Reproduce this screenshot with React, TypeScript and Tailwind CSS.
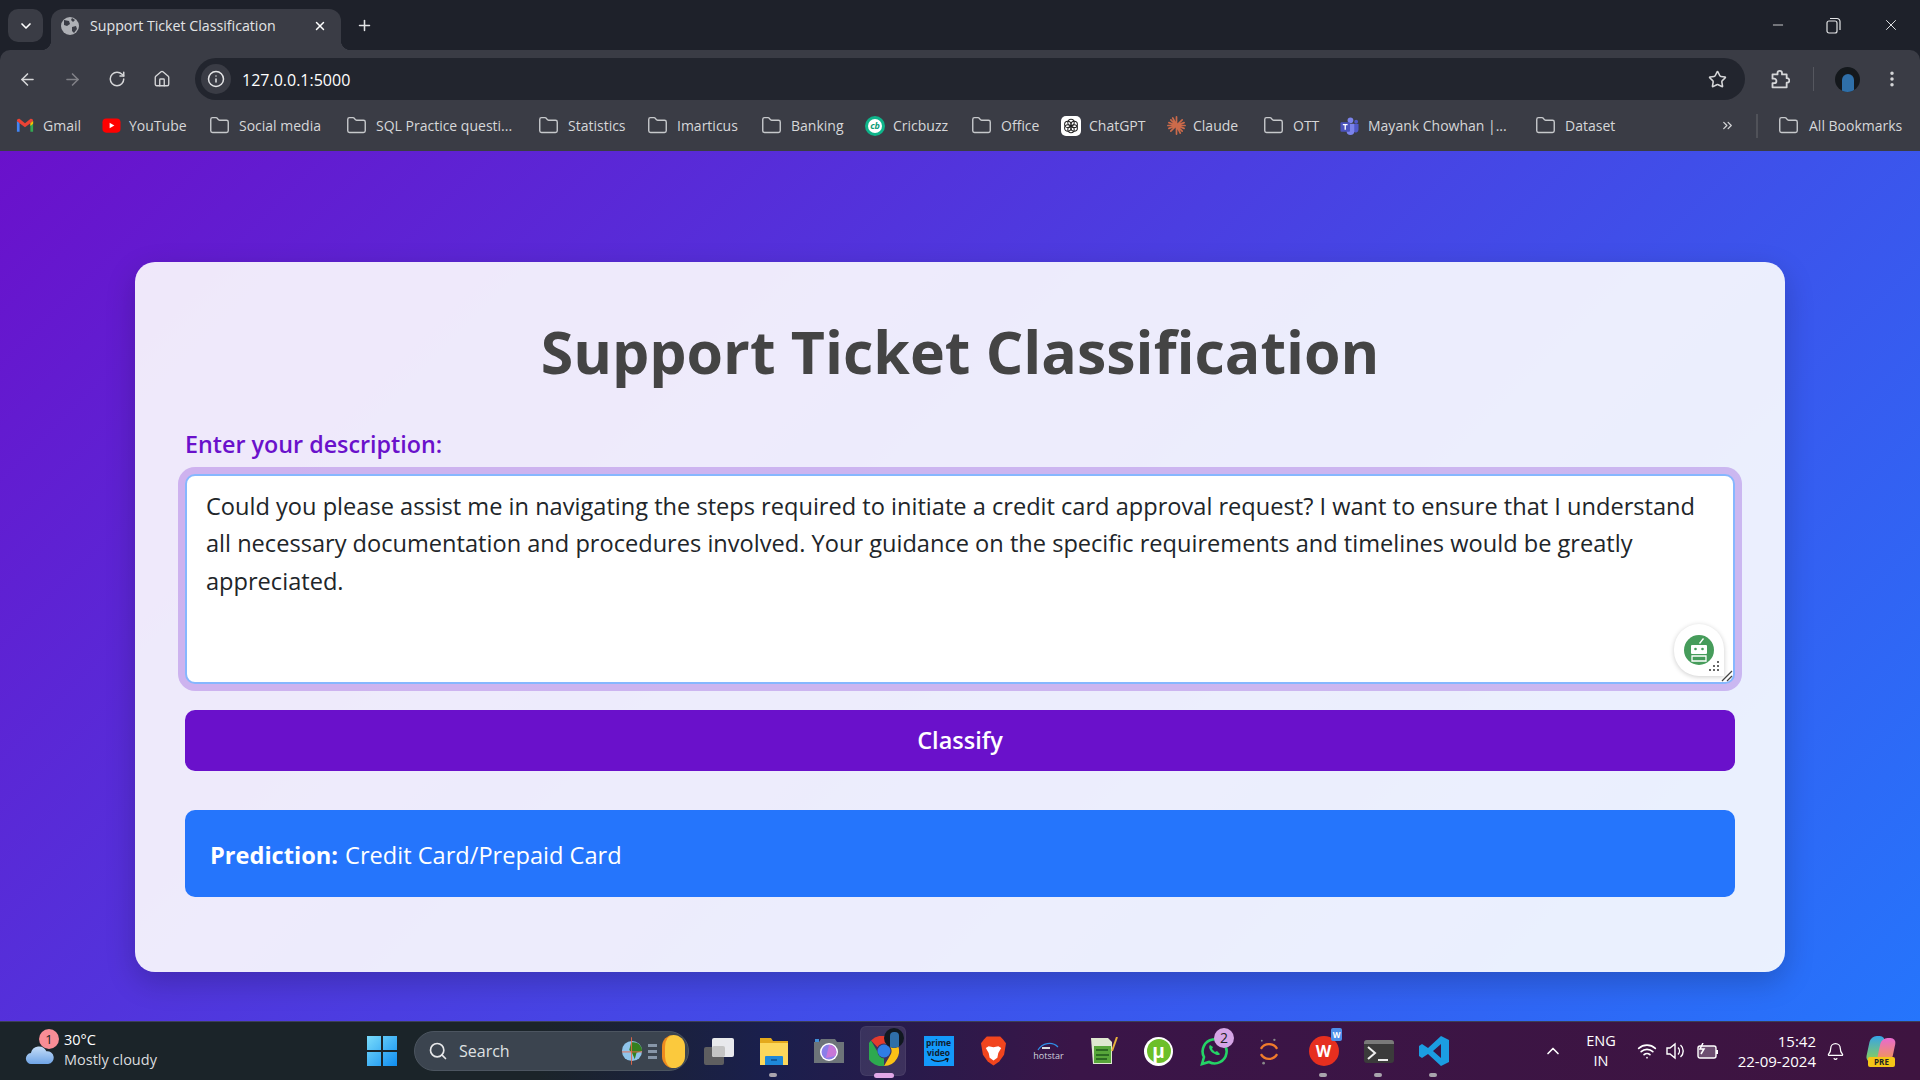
import { ArrowLeft, ArrowRight, RotateCw, Info, Star, MoreVertical, ChevronDown, ChevronUp, X, Plus, Minus, Search, Wifi, Bell, ChevronsRight, Folder, Home } from "lucide-react";
import type { ReactNode } from "react";

const FolderIcon = () => <Folder className="w-[21px] h-[21px] text-[#c7c9cc] shrink-0" strokeWidth={1.6} />;

const Gmail = () => (
  <svg viewBox="0 0 20 16" className="w-[18px] h-[15px] shrink-0">
    <path d="M1 15V3l3 2v10z" fill="#4285f4" />
    <path d="M16 15V5l3-2v12z" fill="#34a853" />
    <path d="M1 3c0-2 2-3 3.500-2L10 5.500 15.500 1C17 0 19 1 19 3l-3 2.500-6 4.500-6-4.500z" fill="#ea4335" />
    <path d="M16 5.500 19 3v3l-3 2.500z" fill="#fbbc04" />
  </svg>
);
const YouTube = () => (
  <svg viewBox="0 0 20 20" className="w-[19px] h-[19px] shrink-0">
    <rect x="0.500" y="2.500" width="19" height="15" rx="4" fill="#f00" />
    <path d="M8 7l5 3-5 3z" fill="#fff" />
  </svg>
);
const Cricbuzz = () => (
  <div className="w-[20px] h-[20px] rounded-full bg-[#0eb48a] flex items-center justify-center shrink-0">
    <div className="w-[14px] h-[14px] rounded-full bg-white text-[#0b9c77] text-[9px] font-bold leading-[14px] text-center italic">cb</div>
  </div>
);
const ChatGPT = () => (
  <div className="w-[20px] h-[20px] rounded-[5px] bg-white flex items-center justify-center shrink-0">
    <svg viewBox="0 0 20 20" className="w-[16px] h-[16px]" fill="none" stroke="#222" strokeWidth="1.300">
      <circle cx="10" cy="5.500" r="4" />
      <circle cx="14" cy="8" r="4" />
      <circle cx="14" cy="12.500" r="4" />
      <circle cx="10" cy="14.500" r="4" />
      <circle cx="6" cy="12.500" r="4" />
      <circle cx="6" cy="8" r="4" />
    </svg>
  </div>
);
const Claude = () => (
  <svg viewBox="0 0 20 20" className="w-[19px] h-[19px] shrink-0" stroke="#cc6a4a" strokeWidth="1.800" strokeLinecap="round">
    <path d="M10 10 10 1M10 10 10 19M10 10 1 10M10 10 19 10M10 10 4 4M10 10 16 4M10 10 4 16M10 10 16 16M10 10 6 2M10 10 14 18M10 10 2 7M10 10 18 13M10 10 18 7M10 10 2 13" />
  </svg>
);
const Teams = () => (
  <svg viewBox="0 0 20 20" className="w-[19px] h-[20px] shrink-0">
    <circle cx="11" cy="4" r="3" fill="#7b83eb" />
    <circle cx="17" cy="5.500" r="2" fill="#5059c9" />
    <path d="M14 8h5.500v6a3 3 0 0 1-5.500 1.500z" fill="#5059c9" />
    <path d="M7 7.500h8v8a4 4 0 0 1-8 0z" fill="#7b83eb" />
    <rect x="0.500" y="6" width="10" height="10" rx="1" fill="#4b53bc" />
    <path d="M3 8.500h5M5.500 8.500v5.500" stroke="#fff" strokeWidth="1.400" />
  </svg>
);

const bookmarks: { label: string; icon: ReactNode; w: string; gap: string }[] = [
  { label: "Gmail", icon: <Gmail />, w: "w-[86px]", gap: "gap-[9px]" },
  { label: "YouTube", icon: <YouTube />, w: "w-[107px]", gap: "gap-[8px]" },
  { label: "Social media", icon: <FolderIcon />, w: "w-[137px]", gap: "gap-[9px]" },
  { label: "SQL Practice questi...", icon: <FolderIcon />, w: "w-[192px]", gap: "gap-[9px]" },
  { label: "Statistics", icon: <FolderIcon />, w: "w-[109px]", gap: "gap-[9px]" },
  { label: "Imarticus", icon: <FolderIcon />, w: "w-[114px]", gap: "gap-[9px]" },
  { label: "Banking", icon: <FolderIcon />, w: "w-[104px]", gap: "gap-[9px]" },
  { label: "Cricbuzz", icon: <Cricbuzz />, w: "w-[106px]", gap: "gap-[8px]" },
  { label: "Office", icon: <FolderIcon />, w: "w-[90px]", gap: "gap-[9px]" },
  { label: "ChatGPT", icon: <ChatGPT />, w: "w-[106px]", gap: "gap-[8px]" },
  { label: "Claude", icon: <Claude />, w: "w-[96px]", gap: "gap-[7px]" },
  { label: "OTT", icon: <FolderIcon />, w: "w-[77px]", gap: "gap-[9px]" },
  { label: "Mayank Chowhan |...", icon: <Teams />, w: "w-[195px]", gap: "gap-[9px]" },
  { label: "Dataset", icon: <FolderIcon />, w: "w-[185px]", gap: "gap-[9px]" },
];

function Chrome() {
  return (
    <div className="shrink-0 bg-[#1e212a] text-[#e3e4e6]">
      <div className="h-[50px] flex items-start">
        <div className="ml-[8px] mt-[9px] w-[35px] h-[33px] rounded-[10px] bg-[#3a3c45] flex items-center justify-center">
          <ChevronDown className="w-[16px] h-[16px] text-white" strokeWidth={2.500} />
        </div>
        <div className="relative ml-[8px] mt-[9px] w-[290px] h-[41px] bg-[#3a3c45] rounded-t-[12px] flex items-center pl-[10px] pr-[14px] pb-[8px]">
          <div className="absolute -left-[10px] bottom-0 w-[10px] h-[10px] bg-[radial-gradient(circle_at_0_0,transparent_10px,#3a3c45_10.500px)]" />
          <div className="absolute -right-[10px] bottom-0 w-[10px] h-[10px] bg-[radial-gradient(circle_at_100%_0,transparent_10px,#3a3c45_10.500px)]" />
          <div className="w-[18px] h-[18px] rounded-full bg-[#aeb0b5] flex items-center justify-center overflow-hidden shrink-0">
            <svg viewBox="0 0 18 18" className="w-[18px] h-[18px]"><path d="M3 3l5 1 1 3-3 2-3-1zM11 10l4-1 1 3-3 4-2-2zM11 1l3 2-2 2-2-2z" fill="#3a3c45" /></svg>
          </div>
          <span className="ml-[11px] flex-1 text-[14.200px] whitespace-nowrap">Support Ticket Classification</span>
          <X className="w-[14px] h-[14px] text-white" strokeWidth={2.500} />
        </div>
        <Plus className="ml-[15px] mt-[17px] w-[17px] h-[17px] text-[#e3e4e6]" strokeWidth={2.200} />
        <div className="ml-auto flex items-center mt-[16px]">
          <Minus className="w-[16px] h-[16px] mr-[40px]" strokeWidth={1.300} />
          <svg viewBox="0 0 15 17" className="w-[15px] h-[17px] mr-[41px]" fill="none" stroke="#e3e4e6" strokeWidth="1.200">
            <rect x="1" y="4" width="10" height="12" rx="2" />
            <path d="M4 1.500h7a3 3 0 0 1 3 3V13" />
          </svg>
          <X className="w-[18px] h-[18px] mr-[20px]" strokeWidth={1.300} />
        </div>
      </div>
      <div className="h-[50px] pt-[8px] flex items-center rounded-t-[10px] bg-[#3a3c45]">
        <ArrowLeft className="ml-[18px] w-[19px] h-[19px] text-[#d5d6d8]" strokeWidth={2} />
        <ArrowRight className="ml-[26px] w-[19px] h-[19px] text-[#808187]" strokeWidth={2} />
        <RotateCw className="ml-[26px] w-[18px] h-[18px] text-[#d5d6d8]" strokeWidth={2} />
        <Home className="ml-[27px] w-[18px] h-[18px] text-[#d5d6d8]" strokeWidth={1.800} />
        <div className="ml-[24px] flex-1 h-[42px] rounded-full bg-[#22252e] flex items-center pl-[6px] pr-[18px]">
          <div className="w-[30px] h-[30px] rounded-full bg-[#3a3c45] flex items-center justify-center">
            <Info className="w-[18px] h-[18px] text-[#e3e4e6]" strokeWidth={2} />
          </div>
          <span className="ml-[11px] pt-[1px] text-[16px] text-white">127.0.0.1:5000</span>
          <Star className="ml-auto w-[19px] h-[19px] text-[#d5d6d8]" strokeWidth={2} />
        </div>
        <svg viewBox="0 0 24 24" className="ml-[25px] w-[20px] h-[20px]" fill="none" stroke="#d5d6d8" strokeWidth="2.200" strokeLinejoin="round">
          <path d="M3 6.500h6V5a2.700 2.700 0 0 1 5.400 0v1.500H20v4.500h.5a2.700 2.700 0 0 1 0 5.400H20V22H3v-5h2a2.700 2.700 0 0 0 0-5.400H3z" />
        </svg>
        <div className="ml-[23px] w-px h-[24px] bg-[#55575f]" />
        <div className="ml-[21px] w-[25px] h-[25px] rounded-full bg-[#14181c] overflow-hidden flex justify-center items-end">
          <div className="w-[12px] h-[18px] rounded-t-[6px] bg-[#2f6fa8]" />
        </div>
        <MoreVertical className="ml-[22px] mr-[18px] w-[20px] h-[20px] text-[#d5d6d8]" strokeWidth={2.200} />
      </div>
      <div className="h-[51px] flex items-center pl-[16px] text-[14px] text-[#d6d7d9] bg-[#3a3c45]">
        {bookmarks.map((b) => (
          <div key={b.label} className={`flex items-center shrink-0 ${b.w} ${b.gap}`}>
            {b.icon}
            <span className="whitespace-nowrap">{b.label}</span>
          </div>
        ))}
        <ChevronsRight className="w-[15px] h-[15px] text-[#d5d6d8]" strokeWidth={2} />
        <div className="ml-[21px] w-[2px] h-[24px] bg-[#505259]" />
        <div className="ml-[20px] flex items-center gap-[10px]">
          <FolderIcon />
          <span className="whitespace-nowrap">All Bookmarks</span>
        </div>
      </div>
    </div>
  );
}

function Main() {
  return (
    <main className="flex-1 min-h-0 bg-[linear-gradient(135deg,#6a11cb,#2575fc)] pt-[111px] px-[135px] font-['Open_Sans',sans-serif]">
      <div className="h-[710px] rounded-[20px] bg-white/90 shadow-[0_10px_30px_rgba(0,0,0,0.2)] pt-[51px] px-[50px]">
        <h1 className="text-[59px] leading-[76px] font-bold text-[#444] text-center">Support Ticket Classification</h1>
        <label className="block mt-[39px] text-[23.300px] leading-[32px] font-semibold text-[#6a11cb]">Enter your description:</label>
        <div className="relative mt-[14px]">
          <textarea
            readOnly
            wrap="off"
            value={"Could you please assist me in navigating the steps required to initiate a credit card approval request? I want to ensure that I understand\nall necessary documentation and procedures involved. Your guidance on the specific requirements and timelines would be greatly\nappreciated."}
            className="block w-full h-[210px] resize-none overflow-hidden bg-white text-[#212529] text-[23.600px] leading-[37.400px] px-[19px] py-[12px] rounded-[10px] border-2 border-[#86b7fe] shadow-[0_0_0_7px_rgba(106,17,203,0.25)] outline-none"
          />
          <div className="absolute right-[11px] bottom-[8px] w-[50px] h-[52px] rounded-full rounded-br-[6px] bg-white shadow-[0_1px_5px_rgba(0,0,0,0.2)] flex items-center justify-center">
            <svg viewBox="0 0 30 30" className="w-[30px] h-[30px]">
              <circle cx="15" cy="15" r="15" fill="#469c5b" />
              <path d="M15 8l4-5 1 1-4 5z" fill="#fff" />
              <rect x="7" y="10" width="16" height="9" rx="1" fill="#fff" />
              <circle cx="11.500" cy="14" r="1.300" fill="#469c5b" />
              <circle cx="18.500" cy="14" r="1.300" fill="#469c5b" />
              <path d="M8 21h14v5H8z" fill="none" stroke="#fff" strokeWidth="1.300" />
            </svg>
            <div className="absolute right-[5px] bottom-[5px] grid grid-cols-3 gap-[2px]">
              <i className="w-[2px] h-[2px]" /><i className="w-[2px] h-[2px]" /><i className="w-[2px] h-[2px] bg-[#666]" />
              <i className="w-[2px] h-[2px]" /><i className="w-[2px] h-[2px] bg-[#666]" /><i className="w-[2px] h-[2px] bg-[#666]" />
              <i className="w-[2px] h-[2px] bg-[#666]" /><i className="w-[2px] h-[2px] bg-[#666]" /><i className="w-[2px] h-[2px] bg-[#666]" />
            </div>
          </div>
          <svg viewBox="0 0 12 12" className="absolute right-[2px] bottom-[2px] w-[12px] h-[12px]" stroke="#444" strokeWidth="1.300">
            <path d="M1 11 11 1M6 11 11 6" />
          </svg>
        </div>
        <button className="block w-full mt-[26px] h-[61px] pt-[1px] rounded-[10px] bg-[#6a11cb] text-white text-[23.500px] font-semibold">Classify</button>
        <div className="mt-[39px] h-[87px] rounded-[10px] bg-[#2575fc] text-white text-[23.600px] flex items-center px-[25px] pt-[4px]">
          <b className="font-bold">Prediction:</b>
          <span className="ml-[7px]">Credit Card/Prepaid Card</span>
        </div>
      </div>
    </main>
  );
}

const Tile = ({ children }: { children: ReactNode }) => (
  <div className="relative w-[55px] h-[58px] flex items-center justify-center shrink-0">{children}</div>
);
const Dot = () => <div className="absolute bottom-[3px] left-[23px] w-[8px] h-[4px] rounded-full bg-[#a9a4ad]" />;

function Taskbar() {
  return (
    <div className="relative h-[59px] shrink-0 border-t border-[#3c3f55] bg-[linear-gradient(90deg,#1b2429_0%,#1b2429_28%,#1a1f4d_40%,#3a1548_56%,#3e1440_100%)] flex items-center text-white font-['Open_Sans',sans-serif]">
      <div className="relative ml-[25px] w-[39px] h-[40px] shrink-0">
        <svg viewBox="0 0 32 22" className="absolute left-0 top-[13px] w-[30px] h-[20px]">
          <defs><linearGradient id="cl" x1="0" y1="0" x2="0" y2="1"><stop offset="0" stopColor="#c5ddf7" /><stop offset="1" stopColor="#6fa4e6" /></linearGradient></defs>
          <path d="M7 22a6 6 0 0 1-1-12 9 9 0 0 1 17-2 7 7 0 0 1 2 14z" fill="url(#cl)" />
        </svg>
        <div className="absolute left-[14px] -top-[2px] w-[20px] h-[20px] rounded-full bg-[#f98d96] text-[#222] text-[13px] leading-[20px] text-center">1</div>
      </div>
      <div className="w-[303px] text-[14.500px] leading-[20px] shrink-0 -mt-[3px]">
        <div>30°C</div>
        <div className="text-[#dadcdf]">Mostly cloudy</div>
      </div>
      <svg viewBox="0 0 30 30" className="w-[30px] h-[30px] shrink-0">
        <defs><linearGradient id="w" x1="0" y1="0" x2="1" y2="1"><stop offset="0" stopColor="#7adcfb" /><stop offset="1" stopColor="#0f8df0" /></linearGradient></defs>
        <path d="M0 0h14v14H0zM16 0h14v14H16zM0 16h14v14H0zM16 16h14v14H16z" fill="url(#w)" />
      </svg>
      <div className="ml-[17px] w-[275px] h-[40px] rounded-full bg-[#3b444f] border border-[#4c5560] flex items-center pl-[13px] shrink-0">
        <Search className="w-[20px] h-[20px] text-[#e7e8ea]" strokeWidth={2} />
        <span className="ml-[11px] text-[16px] text-[#dfe1e3]">Search</span>
        <div className="ml-auto flex items-center mr-[3px]">
          <svg viewBox="0 0 24 30" className="w-[22px] h-[30px]">
            <circle cx="12" cy="15" r="11" fill="#8fc4ea" />
            <path d="M11 6c5-2 12 2 12 9l-6 2-2 7-3-7-3-3z" fill="#35801f" />
            <path d="M1 16h22" stroke="#e8684a" strokeWidth="1" />
            <path d="M11.500 0v30" stroke="#e8684a" strokeWidth="1" />
          </svg>
          <div className="flex flex-col gap-[3px] mx-[5px]">
            <i className="block w-[9px] h-[3px] bg-[#8796a8]" /><i className="block w-[9px] h-[3px] bg-[#8796a8]" /><i className="block w-[9px] h-[3px] bg-[#8796a8]" />
          </div>
          <div className="w-[23px] h-[33px] rounded-full bg-[#fbc93d] border-l-[3px] border-[#ee8a1e]" />
        </div>
      </div>
      <div className="ml-[2px] flex items-center">
        <Tile>
          <div className="relative w-[30px] h-[27px]">
            <div className="absolute left-0 bottom-0 w-[20px] h-[18px] rounded-[2px] bg-[#5e5e60]" />
            <div className="absolute right-0 top-0 w-[22px] h-[19px] rounded-[2px] bg-white/90" />
            <div className="absolute left-[8px] top-[8px] w-[13px] h-[11px] rounded-[2px] bg-[#c4c4c4]" />
          </div>
        </Tile>
        <Tile>
          <svg viewBox="0 0 30 27" className="w-[30px] h-[27px]">
            <path d="M1 0h11l2 3h15v24H1z" fill="#e4a91c" />
            <path d="M1 5h28v22H1z" fill="#fcd75b" />
            <path d="M7 18h16a1 1 0 0 1 1 1v8H6v-8a1 1 0 0 1 1-1z" fill="#1e88d8" />
            <path d="M12 22h6" stroke="#0c4f8c" strokeWidth="1.500" />
          </svg>
          <Dot />
        </Tile>
        <Tile>
          <svg viewBox="0 0 30 24" className="w-[30px] h-[24px]">
            <path d="M0 3h5l2-3h14l2 3h7v21H0z" fill="#6d7479" />
            <circle cx="15" cy="13" r="9" fill="#fff" />
            <circle cx="15" cy="13" r="7.500" fill="#8a7ee8" />
            <path d="M15 6a7 7 0 0 1 6 11l-9 2z" fill="#c777d8" />
            <rect x="1" y="0" width="4" height="3" fill="#3f8fd8" />
          </svg>
        </Tile>
        <Tile>
          <div className="absolute left-[4px] top-[4px] w-[46px] h-[50px] rounded-[6px] bg-white/10 border border-white/5" />
          <svg viewBox="0 0 30 30" className="relative w-[30px] h-[30px]">
            <path d="M15 0a15 15 0 0 1 13 7.500H15a7.500 7.500 0 0 0-6.500 3.750L2 4.500A15 15 0 0 1 15 0z" fill="#e33b2e" />
            <path d="M28 7.500A15 15 0 0 1 15 30l6.500-11.250A7.500 7.500 0 0 0 15 7.500z" fill="#fbc116" />
            <path d="M15 30A15 15 0 0 1 2 4.500l6.500 11.250A7.500 7.500 0 0 0 15 22.500z" fill="#2da94f" />
            <circle cx="15" cy="15" r="6.500" fill="#2f7de6" />
          </svg>
          <div className="absolute right-[7px] top-[6px] w-[20px] h-[20px] rounded-full bg-[#111820] flex justify-center items-end overflow-hidden">
            <div className="w-[9px] h-[16px] rounded-t-[4px] bg-[#2f6fa8]" />
          </div>
          <div className="absolute bottom-[2px] left-[18px] w-[20px] h-[5px] rounded-full bg-[#e2a8e8]" />
        </Tile>
        <Tile>
          <div className="w-[30px] h-[30px] bg-[#1399fb] flex flex-col items-center justify-center text-[#102030] text-[8.500px] leading-[10px] font-bold">
            <span>prime</span>
            <span>video</span>
            <svg viewBox="0 0 20 6" className="w-[20px] h-[6px]"><path d="M2 1c4 3 10 3 16 0M16 0l3 1-1 3" fill="none" stroke="#111" strokeWidth="1.300" /></svg>
          </div>
        </Tile>
        <Tile>
          <svg viewBox="0 0 26 30" className="w-[25px] h-[30px]">
            <path d="M6 0h14l3 3 3 4-2 12-5 7-6 4-6-4-5-7L0 7l3-4z" fill="#f1451e" />
            <path d="M8 10l5 1 5-1 3 2-3 5-1 5-4 3-4-3-1-5-3-5z" fill="#fff" />
          </svg>
        </Tile>
        <Tile>
          <div className="flex flex-col items-center text-[#cfd3dd] text-[9px] leading-[10px]">
            <svg viewBox="0 0 24 10" className="w-[24px] h-[10px]"><path d="M2 9C6 2 16 0 22 6" fill="none" stroke="#2f8fe8" strokeWidth="1.200" /><path d="M6 7h8" stroke="#ddd" strokeWidth="2" /></svg>
            <span>hotstar</span>
          </div>
        </Tile>
        <Tile>
          <svg viewBox="0 0 28 28" className="w-[28px] h-[28px]">
            <path d="M1 1h17l4 4v22H3z" fill="#dfe8d0" />
            <rect x="4" y="9" width="17" height="17" fill="#57a63a" />
            <path d="M6 13h12M6 18h13M6 22h11" stroke="#2c6b22" strokeWidth="2" />
            <path d="M22 14 27 0" stroke="#e6b03d" strokeWidth="2" />
          </svg>
        </Tile>
        <Tile>
          <div className="w-[29px] h-[29px] rounded-full bg-white flex items-center justify-center">
            <div className="w-[24px] h-[24px] rounded-full bg-[#6cbf2a] flex items-center justify-center text-white text-[19px] font-bold leading-none">µ</div>
          </div>
        </Tile>
        <Tile>
          <svg viewBox="0 0 30 30" className="w-[30px] h-[30px]">
            <path d="M3 28l2-7a12 12 0 1 1 5 5z" fill="none" stroke="#25d366" strokeWidth="2.600" />
            <path d="M11 9c-2 2 0 6 3 8s6 3 7 1l-3-3-2 1-3-3 1-2z" fill="#25d366" />
          </svg>
          <div className="absolute right-[7px] top-[6px] w-[20px] h-[20px] rounded-full bg-[#d6a6e6] text-[#222] text-[14px] leading-[20px] text-center">2</div>
        </Tile>
        <Tile>
          <svg viewBox="0 0 24 30" className="w-[22px] h-[27px]" fill="none">
            <path d="M3 12c4-7 14-7 18 0" stroke="#f07b2b" strokeWidth="2.600" />
            <path d="M3 18c4 7 14 7 18 0" stroke="#f07b2b" strokeWidth="2.600" />
            <circle cx="6" cy="28" r="1.500" fill="#8a8a8a" /><circle cx="18" cy="2" r="1.300" fill="#8a8a8a" /><circle cx="4" cy="3" r="1" fill="#8a8a8a" />
          </svg>
        </Tile>
        <Tile>
          <div className="relative w-[30px] h-[30px] rounded-full bg-[#e62f1f] flex items-center justify-center text-white text-[16px] font-bold">W</div>
          <div className="absolute right-[9px] top-[6px] w-[11px] h-[13px] rounded-[2px] bg-[#4d8fea] text-white text-[8px] leading-[13px] text-center font-bold">W</div>
          <Dot />
        </Tile>
        <Tile>
          <div className="w-[30px] h-[23px] rounded-[3px] bg-[#3b3b3b] relative overflow-hidden">
            <div className="h-[4px] bg-[#7a7a7a]" />
            <svg viewBox="0 0 30 19" className="w-[30px] h-[19px]" fill="none" stroke="#eee" strokeWidth="2"><path d="M4 3l7 6-7 6M14 16h10" /></svg>
          </div>
          <Dot />
        </Tile>
        <Tile>
          <svg viewBox="0 0 30 30" className="w-[30px] h-[30px]">
            <path d="M22 0l8 4v22l-8 4-13-12-6 4-3-2V10l3-2 6 4zM22 8l-8 7 8 7z" fill="#1b9de2" />
          </svg>
          <Dot />
        </Tile>
      </div>
      <ChevronUp className="ml-[82px] w-[20px] h-[20px] shrink-0" strokeWidth={2} />
      <div className="ml-[20px] w-[36px] text-center text-[14.500px] leading-[20px]">ENG<br />IN</div>
      <Wifi className="ml-[18px] w-[20px] h-[20px] shrink-0" strokeWidth={2} />
      <svg viewBox="0 0 22 20" className="ml-[8px] w-[22px] h-[20px] shrink-0" fill="none" stroke="#fff" strokeWidth="1.400">
        <path d="M2 7h3l5-4v14l-5-4H2zM13 6.500a5 5 0 0 1 0 7M15.500 4a8 8 0 0 1 0 12" />
      </svg>
      <svg viewBox="0 0 22 16" className="ml-[10px] w-[22px] h-[16px] shrink-0" fill="none" stroke="#fff" strokeWidth="1.400">
        <rect x="1" y="3" width="18" height="12" rx="2" fill="#fff" fillOpacity=".25" />
        <path d="M20 7v4" strokeWidth="2" />
        <path d="M6 0 3 6h4L4 11" strokeWidth="1.500" />
      </svg>
      <div className="ml-auto w-[82px] text-right text-[15px] leading-[20px] shrink-0 whitespace-nowrap">
        <div>15:42</div>
        <div>22-09-2024</div>
      </div>
      <Bell className="ml-[10px] w-[19px] h-[19px] shrink-0" strokeWidth={1.600} />
      <div className="relative ml-[20px] mr-[25px] w-[30px] h-[34px] shrink-0">
        <div className="absolute left-0 top-[2px] w-[15px] h-[26px] rounded-[6px] bg-[linear-gradient(180deg,#36a4e8,#8fd14f)] skew-x-[-12deg] ml-[3px]" />
        <div className="absolute right-0 top-[4px] w-[15px] h-[24px] rounded-[6px] bg-[linear-gradient(180deg,#e86ad0,#f29a4a)] skew-x-[-12deg] mr-[1px]" />
        <div className="absolute left-[3px] top-[23px] w-[27px] h-[10px] rounded-[2px] bg-[#f5c518] text-[#222] text-[8px] leading-[10px] font-bold text-center">PRE</div>
      </div>
    </div>
  );
}

export default function App() {
  return (
    <div className="w-[1920px] h-[1080px] overflow-hidden flex flex-col font-['Open_Sans',sans-serif]">
      <Chrome />
      <Main />
      <Taskbar />
    </div>
  );
}
